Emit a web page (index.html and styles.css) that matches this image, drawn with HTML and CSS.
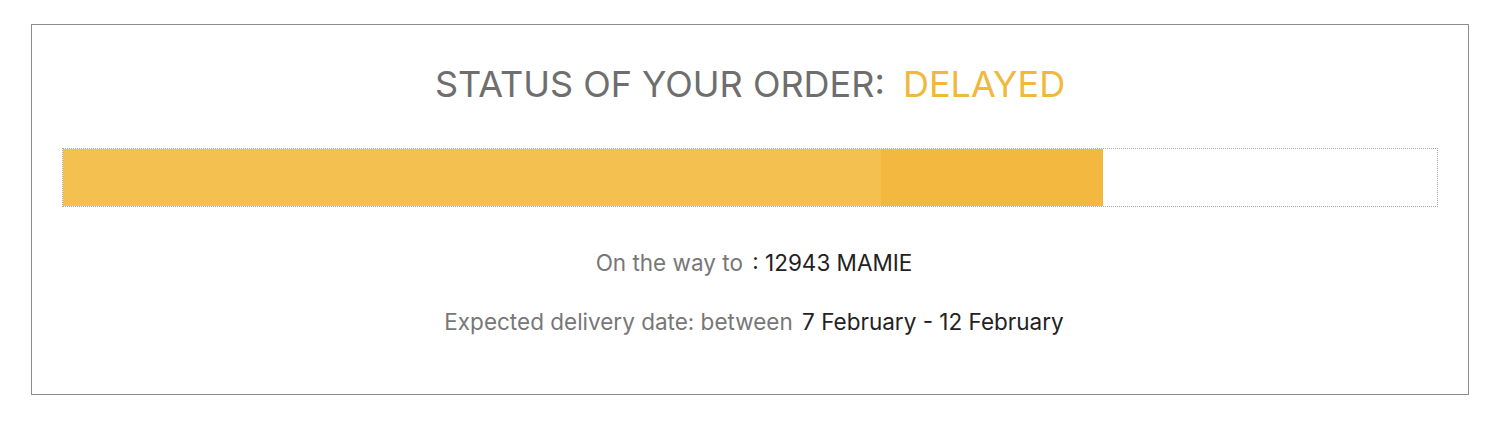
FILE: index.html
```html
<!DOCTYPE html>
<html lang="en">
<head>
<meta charset="utf-8">
<title>Order status</title>
<link rel="stylesheet" href="styles.css">
</head>
<body>
<div class="page">
  <section class="status-card">
    <h1 class="status-title">STATUS OF YOUR ORDER: <span class="status-value">DELAYED</span></h1>
    <div class="progress">
      <div class="progress-seg seg-done" style="width: 59.5%"></div>
      <div class="progress-seg seg-current" style="width: 16.2%"></div>
    </div>
    <p class="info-line"><span class="info-label">On the way to</span> <span class="info-value">: 12943 MAMIE</span></p>
    <p class="info-line"><span class="info-label">Expected delivery date: between</span> <span class="info-value">7 February - 12 February</span></p>
  </section>
</div>
</body>
</html>
```
FILE: styles.css
```css
html, body {
  margin: 0;
  padding: 0;
  background: #ffffff;
}
body {
  font-family: Inter, Roboto, "Liberation Sans", Arial, sans-serif;
}
.page {
  padding: 24px 31px 0 31px;
}
.status-card {
  border: 1px solid #8c8c8c;
  height: 369px;
  box-sizing: content-box;
  padding: 0 30px;
  display: flex;
  flex-direction: column;
  align-items: stretch;
}
.status-title {
  margin: 39px 0 0 0;
  text-align: center;
  font-weight: 400;
  font-size: 36px;
  line-height: 41px;
  color: #6e6e6e;
}
.status-value {
  color: #f0b93c;
  margin-left: 8px;
}
.progress {
  margin-top: 43px;
  height: 57px;
  border: 1px dotted #a8a8a8;
  display: flex;
}
.progress-seg {
  height: 100%;
}
.seg-done {
  background: #f4c150;
}
.seg-current {
  background: #f3b840;
}
.info-line {
  margin: 0;
  padding-left: 8px;
  text-align: center;
  font-size: 22.5px;
  line-height: 30px;
}
.info-line:first-of-type {
  margin-top: 41px;
}
.info-line + .info-line {
  margin-top: 29px;
}
.info-label {
  color: #777777;
}
.info-value {
  color: #222222;
  margin-left: 3px;
}
```
